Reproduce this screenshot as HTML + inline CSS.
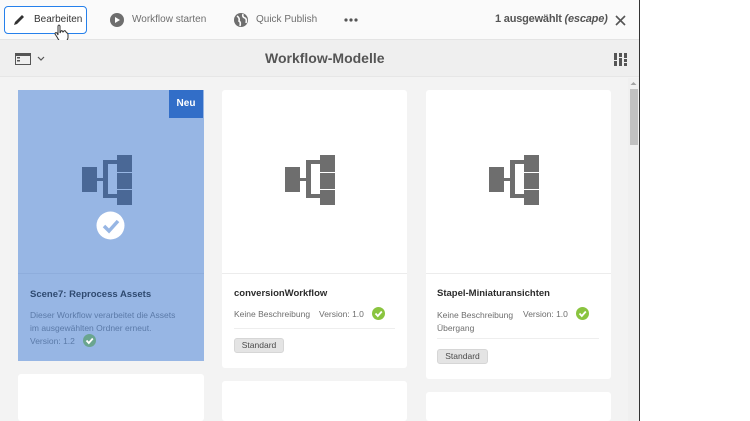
<!DOCTYPE html>
<html><head><meta charset="utf-8"><style>
*{margin:0;padding:0;box-sizing:border-box}
html,body{width:750px;height:421px;overflow:hidden}
body{background:#fff;font-family:"Liberation Sans",sans-serif;position:relative;color:#4b4b4b}
#app{position:absolute;left:0;top:0;width:640px;height:421px;background:#f3f3f3;border-right:1px solid #333;overflow:hidden}
.top{position:absolute;left:0;top:0;width:639px;height:40px;background:#fafafa;border-bottom:1px solid #e4e4e4}
.bar2{position:absolute;left:0;top:40px;width:639px;height:37px;background:#efefef;border-bottom:1px solid #e6e6e6}
.t{position:absolute;font-size:10px;color:#4b4b4b;white-space:nowrap}
.btn{position:absolute;left:4px;top:6px;width:83px;height:28px;border:1px solid #2680eb;border-radius:4px;background:#fff}
.card{position:absolute;background:#fff;border-radius:3px}
.card .img{position:absolute;left:0;top:0;right:0;height:184px;border-bottom:1px solid #ececec}
.title{position:absolute;font-size:9.5px;font-weight:bold;color:#2c2c2c;white-space:nowrap}
.small{position:absolute;font-size:8.5px;color:#6e6e6e;white-space:nowrap}
.tag{position:absolute;height:15px;background:#e4e4e4;border:1px solid #d6d6d6;border-radius:3px;font-size:8.5px;color:#4b4b4b;text-align:center;line-height:13px}
.chk{position:absolute;width:13px;height:13px}
</style></head><body>
<div id="app">
<div class="top">
  <div class="btn"></div>
  <svg style="position:absolute;left:12px;top:13px" width="14" height="14" viewBox="0 0 14 14"><path d="M2 12 L3 9 L10 2 L12 4 L5 11 Z" fill="#333"/></svg>
  <div class="t" style="left:34px;top:14px;color:#333">Bearbeiten</div>
  <svg style="position:absolute;left:54px;top:24px" width="16" height="20" viewBox="0 0 16 20"><path d="M4 2 Q5 0 6 2 L6 9 L7 7 Q8 6 9 8 L10 7 Q11 6 12 8 L13 9 Q14 9 14 11 L14 14 Q13 18 9 18 L7 18 Q5 17 3 13 L1 10 Q1 8 3 9 L4 11 Z" fill="#fff" stroke="#333" stroke-width="1"/></svg>
  <svg style="position:absolute;left:110px;top:13px" width="14" height="14"><circle cx="7" cy="7" r="7" fill="#6e6e6e"/><path d="M5 4 L10 7 L5 10 Z" fill="#fff"/></svg>
  <div class="t" style="left:132px;top:14px;color:#6e6e6e">Workflow starten</div>
  <svg style="position:absolute;left:234px;top:13px" width="14" height="14"><circle cx="7" cy="7" r="7" fill="#6e6e6e"/><path d="M3 3 Q6 5 5 8 Q7 9 6 13 M9 1 Q8 4 11 5 Q13 6 12 10" stroke="#fafafa" stroke-width="1.6" fill="none"/></svg>
  <div class="t" style="left:256px;top:14px;color:#6e6e6e">Quick Publish</div>
  <svg style="position:absolute;left:344px;top:18px" width="14" height="4" fill="#555"><circle cx="2" cy="2" r="1.6"/><circle cx="7" cy="2" r="1.6"/><circle cx="12" cy="2" r="1.6"/></svg>
  <div class="t" style="left:495px;top:13px;font-size:11px;font-weight:bold;color:#555;letter-spacing:-0.2px">1 ausgewählt <i>(escape)</i></div>
  <svg style="position:absolute;left:615px;top:15px" width="11" height="11"><path d="M1 1L10 10M10 1L1 10" stroke="#555" stroke-width="1.6"/></svg>
</div>
<div class="bar2">
  <svg style="position:absolute;left:15px;top:13px" width="16" height="12"><rect x="0.5" y="0.5" width="15" height="11" fill="none" stroke="#555"/><rect x="0" y="0" width="16" height="3" fill="#555"/><rect x="2" y="4" width="3" height="1.5" fill="#555"/><rect x="2" y="7" width="3" height="1.5" fill="#555"/></svg>
  <svg style="position:absolute;left:37px;top:16px" width="8" height="6"><path d="M1 1L4 4L7 1" stroke="#555" fill="none" stroke-width="1.2"/></svg>
  <div class="t" style="left:265px;top:10px;font-size:14px;font-weight:bold;color:#555">Workflow-Modelle</div>
  <svg style="position:absolute;left:614px;top:13px" width="13" height="13" fill="#555"><rect x="0" y="0" width="3" height="7"/><rect x="0" y="8" width="3" height="5"/><rect x="5" y="0" width="3" height="4"/><rect x="5" y="5" width="3" height="8"/><rect x="10" y="0" width="3" height="5"/><rect x="10" y="6" width="3" height="3"/><rect x="10" y="10" width="3" height="3"/></svg>
</div>
<div style="position:absolute;left:628px;top:78px;width:11px;height:343px;background:#f0f0f0"></div>
<div style="position:absolute;left:630px;top:89px;width:8px;height:56px;background:#c1c1c1"></div>
<svg style="position:absolute;left:630px;top:81px" width="7" height="5"><path d="M0.5 4L3.5 1L6.5 4Z" fill="#a3a3a3"/></svg>

<div class="card" style="left:18px;top:90px;width:186px;height:271px;background:#97b6e4;border-radius:0">
  <div class="img" style="border-bottom:1px solid #8eaddc"></div>
  <div style="position:absolute;right:1px;top:0;width:34px;height:28px;background:#326ec8;color:#fff;font-size:10px;font-weight:bold;text-align:center;line-height:28px">Neu</div>
  <svg style="position:absolute;left:64px;top:65px" width="51" height="51" fill="#4a6896"><rect x="0" y="12" width="15" height="25"/><rect x="15" y="23" width="7" height="3"/><rect x="21" y="5" width="5" height="38"/><rect x="21" y="5" width="14" height="4"/><rect x="21" y="39" width="14" height="4"/><rect x="35" y="0" width="15" height="17"/><rect x="35" y="18" width="15" height="16"/><rect x="35" y="35" width="15" height="15"/></svg>
  <svg style="position:absolute;left:78px;top:121px" width="29" height="29"><circle cx="14.5" cy="14.5" r="14" fill="#fff"/><path d="M8 15 L13 20 L22 10" stroke="#97b6e4" stroke-width="3.5" fill="none"/></svg>
  <div class="title" style="left:12px;top:199px;color:#2f4a70">Scene7: Reprocess Assets</div>
  <div class="small" style="left:12px;top:219px;color:#5b7aa8;line-height:13px">Dieser Workflow verarbeitet die Assets<br>im ausgewählten Ordner erneut.<br>Version: 1.2</div>
  <svg class="chk" style="left:65px;top:244px"><circle cx="6.5" cy="6.5" r="6.5" fill="#6aa58f"/><path d="M3.5 6.5L5.8 9L9.8 4.5" stroke="#fff" stroke-width="1.8" fill="none"/></svg>
</div>
<div class="card" style="left:222px;top:90px;width:185px;height:278px">
  <div class="img"></div>
  <svg style="position:absolute;left:63px;top:65px" width="51" height="51" fill="#6e6e6e"><rect x="0" y="12" width="15" height="25"/><rect x="15" y="23" width="7" height="3"/><rect x="21" y="5" width="5" height="38"/><rect x="21" y="5" width="14" height="4"/><rect x="21" y="39" width="14" height="4"/><rect x="35" y="0" width="15" height="17"/><rect x="35" y="18" width="15" height="16"/><rect x="35" y="35" width="15" height="15"/></svg>
  <div class="title" style="left:12px;top:198px">conversionWorkflow</div>
  <div class="small" style="left:12px;top:219px">Keine Beschreibung</div>
  <div class="small" style="left:97px;top:219px">Version: 1.0</div>
  <svg class="chk" style="left:150px;top:217px"><circle cx="6.5" cy="6.5" r="6.5" fill="#8ac43f"/><path d="M3.5 6.5L5.8 9L9.8 4.5" stroke="#fff" stroke-width="1.8" fill="none"/></svg>
  <div style="position:absolute;left:12px;right:12px;top:238px;border-top:1px solid #eee"></div>
  <div class="tag" style="left:12px;top:248px;width:50px">Standard</div>
</div>
<div class="card" style="left:426px;top:90px;width:185px;height:289px">
  <div class="img"></div>
  <svg style="position:absolute;left:63px;top:65px" width="51" height="51" fill="#6e6e6e"><rect x="0" y="12" width="15" height="25"/><rect x="15" y="23" width="7" height="3"/><rect x="21" y="5" width="5" height="38"/><rect x="21" y="5" width="14" height="4"/><rect x="21" y="39" width="14" height="4"/><rect x="35" y="0" width="15" height="17"/><rect x="35" y="18" width="15" height="16"/><rect x="35" y="35" width="15" height="15"/></svg>
  <div class="title" style="left:11px;top:198px">Stapel-Miniaturansichten</div>
  <div class="small" style="left:11px;top:219px;line-height:13px">Keine Beschreibung<br>Übergang</div>
  <div class="small" style="left:97px;top:219px">Version: 1.0</div>
  <svg class="chk" style="left:150px;top:217px"><circle cx="6.5" cy="6.5" r="6.5" fill="#8ac43f"/><path d="M3.5 6.5L5.8 9L9.8 4.5" stroke="#fff" stroke-width="1.8" fill="none"/></svg>
  <div style="position:absolute;left:11px;right:12px;top:248px;border-top:1px solid #eee"></div>
  <div class="tag" style="left:11px;top:259px;width:51px">Standard</div>
</div>
<div class="card" style="left:18px;top:374px;width:186px;height:47px"></div>
<div class="card" style="left:222px;top:381px;width:185px;height:40px"></div>
<div class="card" style="left:426px;top:392px;width:185px;height:29px"></div>
</div>
</body></html>
